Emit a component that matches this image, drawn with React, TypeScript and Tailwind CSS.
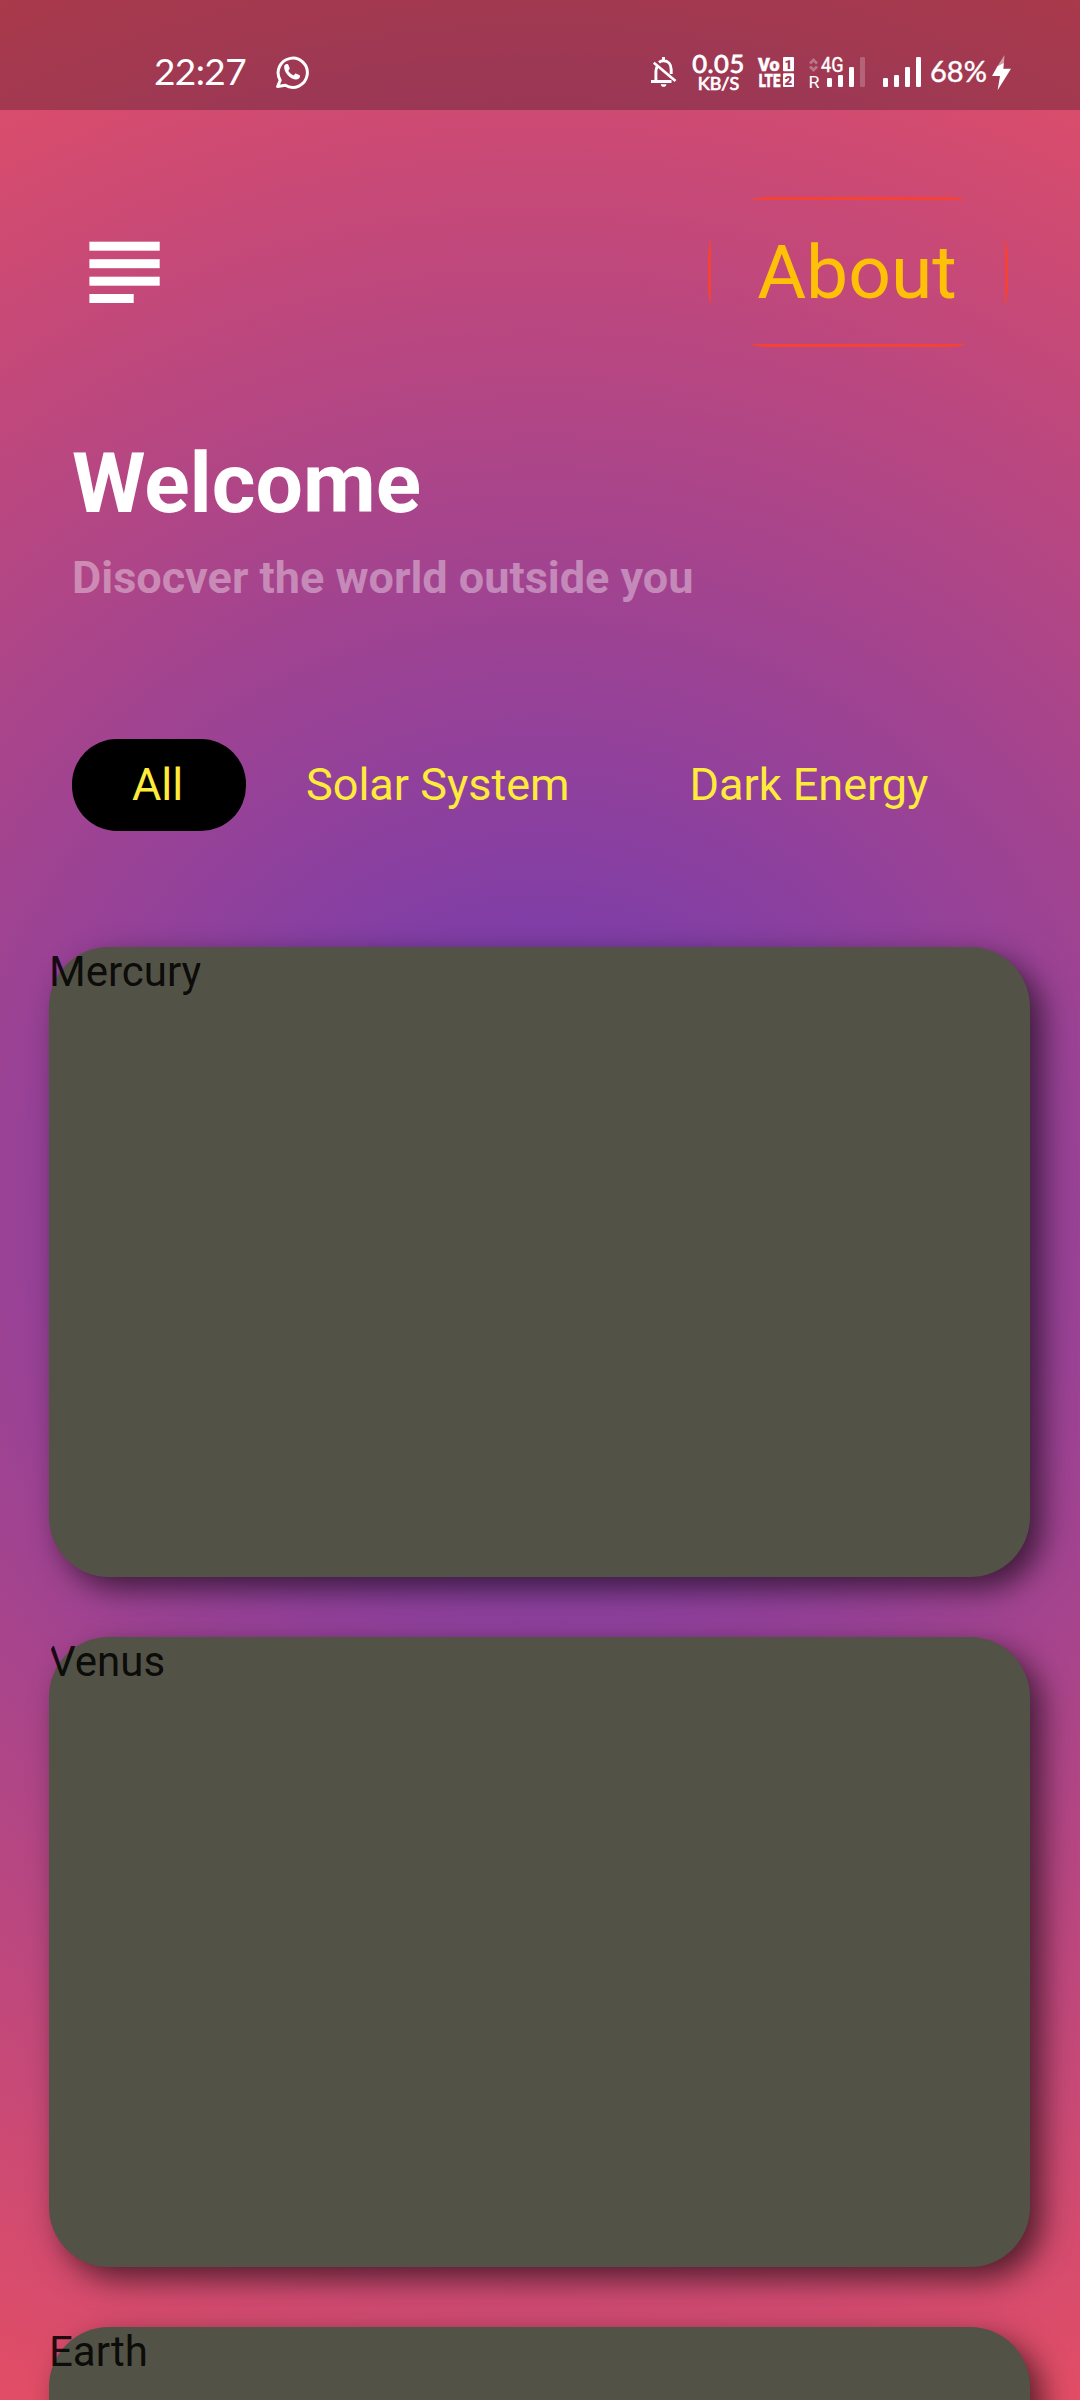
import React from "react";

const planets = ["Mercury", "Venus", "Earth"];

function WhatsAppIcon() {
  return (
    <svg className="ml-[28px] mt-[55px] h-[34px] w-[34px]" viewBox="0 0 34 34" fill="none">
      <path
        d="M5.2 25.2A14.6 14.6 0 1 1 10.3 30.3L2.6 31.6Z"
        stroke="#fff"
        strokeWidth="3"
        strokeLinejoin="round"
      />
      <path
        d="M9.2 11.2c.4-1.600 1.800-2.500 3.200-2.200.5.1.8.5 1 1l1.200 3c.2.6 0 1.200-.4 1.600l-.9 1.100c1.200 2.100 2.900 3.700 5.300 4.700l1.300-1.400c.4-.4.9-.5 1.400-.3l3 1.400c.6.3.8.8.7 1.400-.3 2.100-2.400 3.300-4.600 3C14.600 23.600 8.600 17 9.200 11.200Z"
        fill="#fff"
      />
    </svg>
  );
}

function BellOffIcon() {
  return (
    <svg className="mt-[56px] h-[32px] w-[26px]" viewBox="0 0 26 32" fill="none" stroke="#fff">
      <path d="M0 25.500H20.500M4.900 25.500V15.500c0-2 .4-3.600 1.300-5M8 6.400c1.300-1.100 2.800-1.600 4.500-1.600 4.600 0 7.700 3.500 7.700 8.700v4.500M12.500 1v4" strokeWidth="2.900" />
      <path d="M2.800 6.800 24.500 25" strokeWidth="2.700" />
      <path d="M9.700 28.200h5.800c-.5 1.800-1.400 2.600-2.900 2.600s-2.400-.8-2.900-2.600Z" fill="#fff" stroke="none" />
    </svg>
  );
}

function VolteBadge() {
  return (
    <svg className="ml-[12px] mt-[56px] h-[32px] w-[38px]" viewBox="757 56 38 32" fill="#fff" fontFamily="Roboto" fontWeight="900">
      <g stroke="#fff" strokeWidth=".5">
        <text x="758" y="71" fontSize="19" textLength="21.500" lengthAdjust="spacingAndGlyphs">Vo</text>
        <text x="758.800" y="87" fontSize="18.500" textLength="21.500" lengthAdjust="spacingAndGlyphs">LTE</text>
      </g>
      <rect x="783" y="57" width="11" height="14.300" rx="1" />
      <rect x="783" y="73.300" width="11" height="13.700" rx="1" />
      <g fill="#9f3852" fontSize="13.500" textAnchor="middle">
        <text x="788.300" y="69">1</text>
        <text x="788.500" y="85">2</text>
      </g>
    </svg>
  );
}

function Signals() {
  return (
    <svg className="ml-[13px] mt-[56px] h-[34px] w-[114px]" viewBox="808 56 114 34" fill="#fff">
      <g stroke="#fff" strokeOpacity=".3" strokeWidth="2.800" fill="none">
        <path d="M810 63.500 813.500 60 817 63.500M810 66.500 813.500 70 817 66.500" />
      </g>
      <text x="808.500" y="88" fontSize="17" fontFamily="Roboto" textLength="11" lengthAdjust="spacingAndGlyphs">R</text>
      <text x="821" y="71.500" fontSize="20" fontFamily="Roboto" stroke="#fff" strokeWidth=".4" textLength="22.500" lengthAdjust="spacingAndGlyphs">4G</text>
      <rect x="827" y="78" width="5" height="9" rx="1.200" />
      <rect x="838" y="75" width="5" height="12" rx="1.200" />
      <rect x="849" y="67" width="5" height="20" rx="1.200" />
      <rect x="860" y="57" width="5" height="30" rx="1.200" fillOpacity=".22" />
      <rect x="883" y="78" width="5" height="9" rx="1.200" />
      <rect x="894" y="75" width="5" height="12" rx="1.200" />
      <rect x="905" y="67" width="5" height="20" rx="1.200" />
      <rect x="916" y="57" width="5" height="30" rx="1.200" />
    </svg>
  );
}

function StatusBar() {
  return (
    <div className="flex h-[110px] items-start bg-black/25 text-white">
      <span className="ml-[154px] mt-[49px] w-[93px] whitespace-nowrap font-['Lato'] text-[37px] leading-[44px] tracking-[-0.6px]">22:27</span>
      <WhatsAppIcon />
      <div className="ml-auto flex items-start">
        <BellOffIcon />
        <div className="ml-[15px] mt-[51px] flex w-[53px] flex-col items-center whitespace-nowrap font-['Lato']">
          <span className="text-[25.500px] leading-[24px] tracking-[0.5px] [-webkit-text-stroke:0.8px_white]">0.05</span>
          <span className="text-[18px] leading-[16px] [-webkit-text-stroke:0.7px_white]">KB/S</span>
        </div>
        <VolteBadge />
        <Signals />
        <span className="ml-[8px] mt-[53px] w-[58px] whitespace-nowrap font-['Lato'] text-[29px] leading-[36px] [-webkit-text-stroke:0.4px_white]">68%</span>
        <svg className="ml-[4px] mr-[69px] mt-[54px] h-[37px] w-[19px]" viewBox="0 0 19 37">
          <path d="M12.500 1 11.500 14 4.700 13.500Z" fill="#fff" fillOpacity=".5" />
          <path d="M5.300 12.500 0 22H8L5.600 36.200 19 14.800H11.200L11.700 9Z" fill="#fff" />
        </svg>
      </div>
    </div>
  );
}

function MenuIcon() {
  return (
    <svg className="h-[62px] w-[71px]" viewBox="0 0 71 62" fill="#fff">
      <rect x=".4" y=".7" width="70.300" height="9" />
      <rect x=".4" y="18.200" width="70.300" height="9" />
      <rect x=".4" y="35.700" width="70.300" height="9" />
      <rect x=".4" y="53" width="44.300" height="9" />
    </svg>
  );
}

export default function App() {
  return (
    <div className="h-[2400px] w-[1080px] overflow-hidden bg-[radial-gradient(circle_1620px_at_540px_1200px,#673ab7,#ff5252)] font-['Roboto',sans-serif]">
      <StatusBar />
      <header className="mt-[87px] flex h-[150px] items-center justify-between pl-[89px] pr-[72px]">
        <MenuIcon />
        <div className="h-[150px] w-[300px] overflow-hidden rounded-[60px]">
          <div className="flex h-full items-center justify-center border-[3px] border-[#f44336] pr-[2px] text-[75px] text-[#ffc107]">
            About
          </div>
        </div>
      </header>
      <section className="pl-[72px]">
        <h1 className="mt-[88px] text-[84px] font-bold leading-[98px] text-white">Welcome</h1>
        <p className="mt-[18px] text-[45px] font-bold leading-[53px] text-white/38">Disocver the world outside you</p>
      </section>
      <nav className="ml-[72px] mt-[135px] flex h-[92px] items-center text-[45px] text-[#ffeb3b]">
        <span className="flex h-full w-[174px] items-center rounded-[45px] bg-black pl-[60px]">All</span>
        <span className="px-[60px]">Solar System</span>
        <span className="px-[60px]">Dark Energy</span>
      </nav>
      <main className="ml-[49px] mr-[50px] mt-[116px] flex flex-col gap-[60px]">
        {planets.map((name) => (
          <article
            key={name}
            className="flex h-[630px] shrink-0 items-start rounded-[60px] bg-[#525246] shadow-[12px_12px_30px_rgba(0,0,0,0.6)]"
          >
            <span className="h-[49px] overflow-hidden rounded-[21px] text-[42px] leading-[49px] text-black/87">{name}</span>
          </article>
        ))}
      </main>
    </div>
  );
}
